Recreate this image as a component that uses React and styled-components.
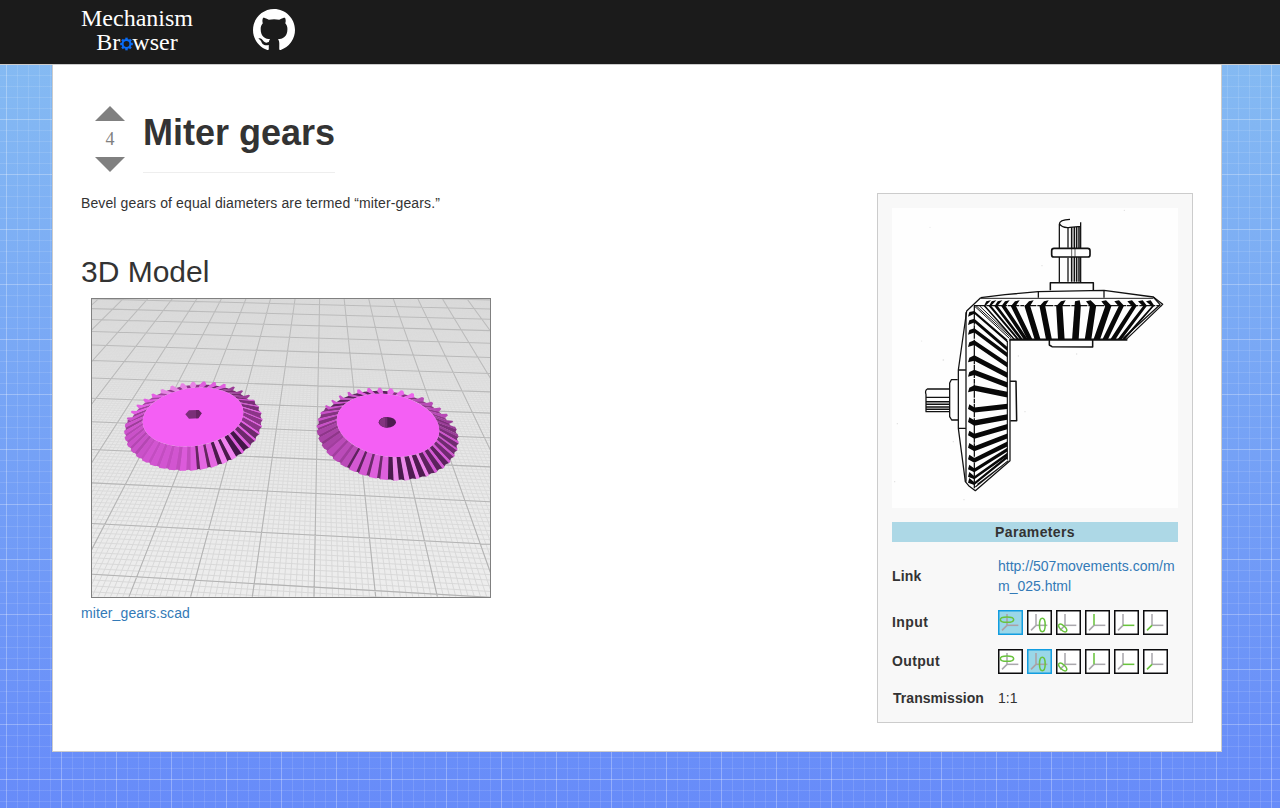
import React from "react";
import styled, { createGlobalStyle } from "styled-components";

const Global = createGlobalStyle`
  *, *::before, *::after { box-sizing: border-box; }
  html { height: 100%; }
  body {
    margin: 0;
    min-height: 100vh;
    font: 14px/20px "Liberation Sans", Arial, sans-serif;
    color: #333;
    background:
      repeating-linear-gradient(90deg, transparent 0 6px, rgba(255,255,255,.2) 6px 7px, transparent 7px 55px),
      repeating-linear-gradient(180deg, transparent 0 9px, rgba(255,255,255,.2) 9px 10px, transparent 10px 55px),
      repeating-linear-gradient(90deg, transparent 0 6px, rgba(255,255,255,.11) 6px 7px, transparent 7px 11px),
      repeating-linear-gradient(180deg, transparent 0 9px, rgba(255,255,255,.11) 9px 10px, transparent 10px 11px),
      linear-gradient(180deg, #87bef2, #678bf9);
  }
`;

const Header = styled.header`
  height: 65px;
  background: #1b1b1b;
  border-bottom: 1px solid #ccc;
  display: flex;
  align-items: flex-start;
  padding-left: 81px;
`;
const Logo = styled.div`
  width: 112px;
  padding-top: 6px;
  color: #fff;
  text-align: center;
  font: 24px/24px "Liberation Serif", "Times New Roman", serif;
`;
const LogoLine = styled.div`
  display: flex;
  justify-content: center;
  align-items: baseline;
  height: 24px;
`;
const Cog = styled.svg`
  width: 13px;
  height: 14px;
  margin: 0 -0.5px 3px;
  align-self: flex-end;
`;
const Octocat = styled.svg`
  width: 42px;
  height: 42px;
  margin: 9px 0 0 60px;
  fill: #fff;
`;
const Sheet = styled.main`
  width: 1170px;
  height: 687px;
  margin-left: 52px;
  background: #fff;
  border: 1px solid #ccc;
  border-top: 0;
  padding: 41px 28px 28px;
`;
const TitleRow = styled.div`
  display: flex;
  height: 67px;
  padding-left: 14px;
  gap: 18px;
`;
const Votes = styled.div`
  width: 30px;
  height: 66px;
  display: flex;
  flex-direction: column;
  align-items: center;
  justify-content: space-between;
  font: 18px/20px "Liberation Serif", "Times New Roman", serif;
  color: #808080;
`;
const Arrow = styled.span`
  width: 30px;
  height: 15px;
  background: #808080;
  clip-path: ${(p) => (p.$down ? "polygon(0 0, 100% 0, 50% 100%)" : "polygon(50% 0, 100% 100%, 0 100%)")};
`;
const Title = styled.h1`
  margin: 0;
  height: 67px;
  padding-top: 7px;
  border-bottom: 1px solid #eee;
  font-size: 36px;
  line-height: 40px;
  font-weight: bold;
`;
const Columns = styled.div`
  display: flex;
  justify-content: space-between;
  align-items: flex-start;
  padding-top: 20px;
`;
const Article = styled.section`
  display: flex;
  flex-direction: column;
  align-items: flex-start;
`;
const Lead = styled.p`
  margin: 0 0 42px;
  letter-spacing: 0.115px;
`;
const Subtitle = styled.h2`
  margin: 0 0 10px;
  font-size: 30px;
  line-height: 33px;
  font-weight: normal;
`;
const Viewer = styled.svg`
  width: 400px;
  height: 300px;
  margin: 0 0 5px 10px;
  border: 1px solid #808080;
  display: block;
`;
const Link = styled.a`
  color: #337ab7;
  text-decoration: none;
  word-break: break-all;
`;
const FileLink = styled(Link)`
  letter-spacing: 0.1px;
`;
const InfoBox = styled.aside`
  width: 316px;
  height: 530px;
  background: #f8f8f8;
  border: 1px solid #ccc;
  padding: 14px;
`;
const Engraving = styled.svg`
  display: block;
  width: 286px;
  height: 300px;
  background: #fefefe;
  margin-bottom: 14px;
`;
const Caption = styled.div`
  background: #add8e6;
  height: 20px;
  text-align: center;
  font-weight: bold;
  letter-spacing: 0.36px;
  margin-bottom: 14px;
`;
const Row = styled.div`
  display: grid;
  grid-template-columns: 106px 180px;
  align-items: center;
  height: ${(p) => p.$h}px;
`;
const Label = styled.strong`
  padding-left: ${(p) => p.$indent || 0}px;
  padding-bottom: ${(p) => p.$lift || 0}px;
  letter-spacing: ${(p) => p.$track || 0}px;
`;
const Icons = styled.div`
  display: flex;
  gap: 4px;
`;
const AxisBox = styled.svg`
  width: 25px;
  height: 25px;
  display: block;
  fill: none;
  stroke: ${(p) => (p.$on ? "#aba0a5" : "#aaa8ad")};
  stroke-width: 4.6;
  .hot { stroke: #69c33d; }
  .frame {
    fill: ${(p) => (p.$on ? "#9ad7e8" : "#fff")};
    stroke: ${(p) => (p.$on ? "#129de0" : "#0c0c0e")};
    stroke-width: 4.5;
  }
`;

const AXES = ["M27 12V46", "M27 46H61", "M27 46L12 61"];
function AxisIcon({ kind, on }) {
  const order = kind > 2 ? AXES.filter((_, i) => i !== kind - 3) : AXES;
  return (
    <AxisBox $on={on} viewBox="0 0 75 75">
      <rect className="frame" x="2.25" y="2.25" width="70.5" height="70.5" />
      {order.map((d) => <path key={d} d={d} />)}
      {kind > 2 && <path className="hot" d={AXES[kind - 3]} />}
      {kind === 0 && <ellipse className="hot" cx="27" cy="29" rx="20" ry="8" />}
      {kind === 1 && <ellipse className="hot" cx="46" cy="45" rx="8.5" ry="20" />}
      {kind === 2 && <ellipse className="hot" cx="20" cy="54" rx="15" ry="7" transform="rotate(43 20 54)" />}
    </AxisBox>
  );
}
function AxisRow({ active }) {
  return <Icons>{[0, 1, 2, 3, 4, 5].map((k) => <AxisIcon key={k} kind={k} on={k === active} />)}</Icons>;
}

// Build-plate grid seen in perspective
const depthY = (n) => -544 + 1 / (0.000706 + 0.0000871 * n);
function acrossPath(step, from, to) {
  let d = "";
  for (let n = from; n <= to + 1e-6; n += step) {
    const y = depthY(n);
    const s = (y + 640) / 26000;
    d += `M0 ${(y - 606 * s).toFixed(1)}L1206 ${(y + 600 * s).toFixed(1)}`;
  }
  return d;
}
function alongPath(step) {
  let d = "";
  for (let k = -12; k <= 12 + 1e-6; k += step) {
    const x = 672 + 185 * k;
    const t = 900 / 1485;
    d += `M${x.toFixed(1)} 905L${(x + (700 - x) * t).toFixed(1)} 5`;
  }
  return d;
}
const MAJOR = acrossPath(1, -1, 13) + alongPath(1);
const MINOR_NEAR = acrossPath(0.1, -1, 13) + alongPath(0.1);

// Shading stops: [angle, flank, gap, flank share]; angle runs clockwise from the right
const LEFT_SHADE = [
  [0, "#e25ae1", "#8b3488", 0.3], [22, "#e45ce4", "#6c296b", 0.35], [40, "#df60df", "#431648", 0.4],
  [62, "#f183f0", "#4a1b4c", 0.6], [74, "#e567e3", "#64275f", 0.7], [92, "#dc5adb", "#c14dbe", 0.6],
  [120, "#d255d1", "#c34dc1", 0.65], [165, "#ca51c9", "#b447b2", 0.55], [190, "#ce53cd", "#9c3d99", 0.5],
  [225, "#e45ee4", "#a341a0", 0.5], [262, "#e783e5", "#8d3689", 0.6], [290, "#df5ede", "#712b6e", 0.6],
  [320, "#9b3d97", "#75296f", 0.5], [345, "#d456d3", "#7b2f79", 0.35], [360, "#e25ae1", "#8b3488", 0.3],
];
const RIGHT_SHADE = [
  [0, "#cf54ce", "#702b70", 0.4], [30, "#d659d6", "#5c225d", 0.4], [55, "#ef86ec", "#4e1b50", 0.4],
  [75, "#ed8aeb", "#4a1a4d", 0.5], [90, "#de60dd", "#6d2b6b", 0.7], [108, "#d458d3", "#5e235e", 0.7],
  [130, "#bb4bb9", "#a13e9e", 0.65], [160, "#a843a5", "#8e3689", 0.6], [185, "#c850c7", "#83347f", 0.3],
  [215, "#cd53cc", "#602461", 0.4], [245, "#e35fe2", "#5a205b", 0.5], [275, "#ec65eb", "#84317f", 0.6],
  [305, "#b84ab6", "#8d3889", 0.6], [340, "#9b3d99", "#7b2f79", 0.5], [360, "#cf54ce", "#702b70", 0.4],
];
const ring = (c, rx, ry, rot, deg) => {
  const a = (deg * Math.PI) / 180;
  const r = (rot * Math.PI) / 180;
  const x = rx * Math.cos(a);
  const y = ry * Math.sin(a);
  return [c[0] + x * Math.cos(r) - y * Math.sin(r), c[1] + x * Math.sin(r) + y * Math.cos(r)];
};
const pts = (list) => list.map((p) => p[0].toFixed(1) + "," + p[1].toFixed(1)).join(" ");
function BevelGear({ shade, face, rim, teeth, lead }) {
  const inner = (d) => ring(face.c, face.rx, face.ry, face.rot, d);
  const outer = (d, k = 1) => ring(rim.c, rim.rx * k, rim.ry * k, rim.rot, d);
  const step = 360 / teeth;
  const items = [];
  for (let i = 0; i < teeth; i++) {
    const a = i * step + lead;
    let s = shade[0];
    for (const row of shade) if (Math.abs(row[0] - a) < Math.abs(s[0] - a)) s = row;
    const m = a + step * s[3];
    const e = a + step;
    const back = a > 195 && a < 335;
    const dip = back ? 0.935 : 0.975;
    const tip = back
      ? [outer(a + step * 0.22, 1.005), outer(a + step * 0.42, 1.005), outer(m + step * 0.05, dip)]
      : [outer(a + step * 0.06, 0.995), outer(m, 1)];
    items.push(
      <g key={i}>
        <polygon fill={s[2]} points={pts([inner(m - 0.6), outer(m - 0.6, back ? dip : 1), outer((m + e) / 2, dip), outer(e + 0.6, back ? dip : 0.985), inner(e + 0.6)])} />
        <polygon fill={s[1]} points={pts([inner(a), outer(a, dip), ...tip, inner(m)])} />
      </g>
    );
  }
  return (
    <g>
      {items}
      <ellipse cx={face.c[0]} cy={face.c[1]} rx={face.rx} ry={face.ry} transform={`rotate(${face.rot} ${face.c[0]} ${face.c[1]})`} fill="#f45ff4" />
    </g>
  );
}

function ModelView() {
  return (
    <Viewer viewBox="6 12 1194 894" preserveAspectRatio="none">
      <defs>
        <linearGradient id="plate" x1="0" y1="0" x2="0" y2="1">
          <stop offset="0" stopColor="#dadada" />
          <stop offset=".4" stopColor="#e6e6e6" />
          <stop offset="1" stopColor="#eeeeee" />
        </linearGradient>
        <linearGradient id="fade" x1="0" y1="0" x2="0" y2="1">
          <stop offset="0" stopColor="#fff" stopOpacity=".15" />
          <stop offset=".45" stopColor="#fff" stopOpacity=".7" />
          <stop offset="1" stopColor="#fff" stopOpacity="1" />
        </linearGradient>
        <linearGradient id="major" gradientUnits="userSpaceOnUse" x1="0" y1="0" x2="0" y2="905">
          <stop offset="0" stopColor="#bcbcbc" />
          <stop offset="1" stopColor="#b2b2b2" />
        </linearGradient>
        <mask id="near" maskUnits="userSpaceOnUse" x="0" y="0" width="1210" height="910">
          <rect width="1210" height="910" fill="url(#fade)" />
        </mask>
      </defs>
      <rect width="1210" height="910" fill="url(#plate)" />
      <path d={MINOR_NEAR} stroke="#d6d6d6" strokeWidth="2.8" fill="none" mask="url(#near)" />
      <path d={MAJOR} stroke="url(#major)" strokeWidth="3.2" fill="none" />
      <BevelGear
        shade={LEFT_SHADE} teeth={40} lead={2}
        face={{ c: [309, 366], rx: 152, ry: 87, rot: -8 }}
        rim={{ c: [310, 394], rx: 209, ry: 132, rot: -8 }}
      />
      <polygon points="286,358 297,346 326,345 335,355 325,370 297,371" fill="#7a2f78" />
      <polygon points="318,345 326,345 335,355 325,370 318,370" fill="#662563" />
      <BevelGear
        shade={RIGHT_SHADE} teeth={40} lead={3}
        face={{ c: [894, 391], rx: 155, ry: 93, rot: 9 }}
        rim={{ c: [893, 418], rx: 215, ry: 137, rot: 9 }}
      />
      <ellipse cx="892" cy="382" rx="26" ry="16" fill="#4d1c4f" />
      <path d="M892 366A26 16 0 0 0 885 397L892 398Z" fill="#702b70" />
      <path d="M885 367A26 16 0 0 0 885 397Z" fill="#83347f" />
    </Viewer>
  );
}

// Tooth marks of the engraving: [position at the rim, position at the root, width]
const TOP_TEETH = [[284, 374, 5], [300, 385, 7], [318, 395, 9], [340, 408, 12], [370, 420, 15], [412, 443, 17], [457, 477, 17], [508, 514, 19], [563, 556, 19], [609, 594, 19], [655, 620, 19], [694, 645, 16], [733, 668, 15], [765, 688, 12], [789, 700, 8]];
const SIDE_TEETH = [[322, 408, 8], [347, 432, 11], [376, 450, 13], [413, 480, 14], [459, 511, 16], [502, 540, 16], [549, 569, 17], [615, 604, 15], [654, 636, 16], [694, 665, 15], [731, 693, 15], [766, 717, 14], [796, 734, 11], [818, 748, 9], [836, 756, 8]];

function EngravingView() {
  return (
    <Engraving viewBox="6 9 858 900">
      <g fill="none" stroke="#111" strokeWidth="3.8" strokeLinejoin="round">
        <path d="M508 232V58Q508 44 540 43M508 56Q516 70 540 67L572 64M572 52V232M534 70V128M534 158V230" />
        <path d="M545 66V230M553 66V230M560 66V230M567 66V230" strokeWidth="4.6" />
        <rect x="485" y="130" width="115" height="26" rx="7" fill="#fff" strokeWidth="5" />
        <path d="M545 132V155M555 132V155" strokeWidth="2" />
        <path d="M481 256V233H610V256" strokeWidth="4.6" />
        <path d="M272 278L345 269L445 260L642 256L790 276L818 298L708 404" />
        <path d="M445 260V278M642 256V278" />
        <path d="M272 280H790" strokeWidth="2.8" />
        <path d="M252 302H815" strokeDasharray="34 3 12 2" />
        <path d="M358 404H712" strokeWidth="6.5" />
        <path d="M478 405V420L486 425L608 426V405" strokeWidth="4.6" />
        <path d="M272 278L230 318L205 495V670L226 830L236 842L256 857L360 767V404" />
        <path d="M790 276L810 299L700 400" />
        <path d="M228 322V830M205 495H226M205 670H226" />
        <path d="M253 302V850" strokeDasharray="40 3 14 2" />
        <path d="M352 408V764" strokeWidth="3.4" />
        <path d="M252 302L358 400M258 302L363 398M268 302L370 400" strokeWidth="3" />
        <path d="M262 838L345 775M256 846L355 767" strokeWidth="3.4" />
        <path d="M203 524H184L179 534V635L185 645H204" />
        <path d="M360 529H378L380 647H361" strokeWidth="4.6" />
        <path d="M179 552H112Q104 556 108 569V620H179M108 577H179" />
        <path d="M108 590H179M108 598H179M108 606H179M108 613H179" strokeWidth="4.5" />
      </g>
      <g fill="#080808">
        {TOP_TEETH.map(([a, b, w], i) => {
          const lean = i < 8 ? 13 : i < 9 ? 0 : -13;
          return (
            <path key={a} d={`M${a - w / 2} 304L${a + lean - 8} 289L${a + lean + 6} 286L${a + w / 2} 302L${b + w * 0.52} 404H${b - w * 0.52}Z`} />
          );
        })}
        {SIDE_TEETH.map(([a, b, w], i) => {
          const lean = i < 7 ? 6 : -10;
          return (
            <path key={a} d={`M253 ${a - w / 2}L238 ${a + lean - 7}L234 ${a + lean + 7}L253 ${a + w / 2}L352 ${b + w * 0.52}V${b - w * 0.52}Z`} />
          );
        })}
      </g>
      <g fill="#ddd">
        <circle cx="120" cy="67" r="1.5" /><circle cx="703" cy="16" r="2" /><circle cx="456" cy="182" r="2" />
        <circle cx="160" cy="465" r="2.5" /><circle cx="22" cy="656" r="2" /><circle cx="405" cy="620" r="2" />
        <circle cx="95" cy="408" r="1.5" /><circle cx="190" cy="710" r="2" /><circle cx="222" cy="884" r="2" />
        <circle cx="385" cy="453" r="2" /><circle cx="560" cy="447" r="2" /><circle cx="14" cy="830" r="2" />
      </g>
    </Engraving>
  );
}

function CogIcon() {
  return (
    <Cog viewBox="-7 -7 14 14">
      <circle r="4.2" fill="none" stroke="#0a6cf5" strokeWidth="2.2" />
      {[0, 45, 90, 135, 180, 225, 270, 315].map((a) => (
        <rect key={a} x="-1.3" y="-6.8" width="2.6" height="2.4" fill="#0a6cf5" transform={`rotate(${a})`} />
      ))}
    </Cog>
  );
}

export default function App() {
  return (
    <>
      <Global />
      <Header>
        <Logo>
          <LogoLine>Mechanism</LogoLine>
          <LogoLine>Br<CogIcon />wser</LogoLine>
        </Logo>
        <Octocat viewBox="0 0 16 16">
          <path d="M8 0C3.58 0 0 3.58 0 8c0 3.54 2.29 6.53 5.47 7.59.4.07.55-.17.55-.38 0-.19-.01-.82-.01-1.49-2.01.37-2.53-.49-2.69-.94-.09-.23-.48-.94-.82-1.13-.28-.15-.68-.52-.01-.53.63-.01 1.08.58 1.23.82.72 1.21 1.87.87 2.33.66.07-.52.28-.87.51-1.07-1.78-.2-3.64-.89-3.64-3.95 0-.87.31-1.59.82-2.15-.08-.2-.36-1.02.08-2.12 0 0 .67-.21 2.2.82.64-.18 1.32-.27 2-.27.68 0 1.36.09 2 .27 1.53-1.04 2.2-.82 2.2-.82.44 1.1.16 1.92.08 2.12.51.56.82 1.27.82 2.15 0 3.07-1.87 3.75-3.65 3.95.29.25.54.73.54 1.48 0 1.07-.01 1.93-.01 2.2 0 .21.15.46.55.38A8.013 8.013 0 0016 8c0-4.42-3.58-8-8-8z" />
        </Octocat>
      </Header>
      <Sheet>
        <TitleRow>
          <Votes>
            <Arrow />
            <span>4</span>
            <Arrow $down />
          </Votes>
          <Title>Miter gears</Title>
        </TitleRow>
        <Columns>
          <Article>
            <Lead>Bevel gears of equal diameters are termed “miter-gears.”</Lead>
            <Subtitle>3D Model</Subtitle>
            <ModelView />
            <FileLink>miter_gears.scad</FileLink>
          </Article>
          <InfoBox>
            <EngravingView />
            <Caption>Parameters</Caption>
            <Row $h={40}>
              <Label $track={0.2}>Link</Label>
              <Link>http://507movements.com/mm_025.html</Link>
            </Row>
            <Row $h={53}>
              <Label $track={0.4} $lift={2}>Input</Label>
              <AxisRow active={0} />
            </Row>
            <Row $h={25}>
              <Label $track={0.35} $lift={2}>Output</Label>
              <AxisRow active={1} />
            </Row>
            <Row $h={47}>
              <Label $indent={1} $track={0.05}>Transmission</Label>
              <span>1:1</span>
            </Row>
          </InfoBox>
        </Columns>
      </Sheet>
    </>
  );
}
